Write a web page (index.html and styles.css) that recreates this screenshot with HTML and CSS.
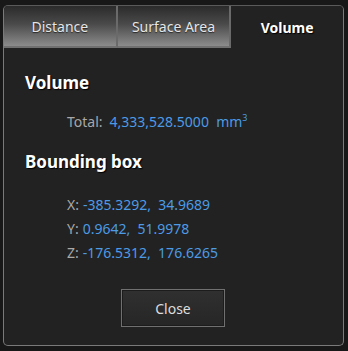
FILE: index.html
```html
<!DOCTYPE html>
<html lang="en">
<head>
    <meta charset="UTF-8">
    <title>Measure</title>
    <link rel="stylesheet" href="styles.css">
</head>
<body>
    <div class="dialog">
        <div class="tabs">
            <div class="tab">Distance</div>
            <div class="tab">Surface Area</div>
            <div class="tab active">Volume</div>
        </div>
        <div class="content">
            <h2>Volume</h2>
            <div class="row total">
                <span class="label">Total:</span>
                <span class="value">4,333,528.5000&nbsp; mm<sup>3</sup></span>
            </div>
            <h2>Bounding box</h2>
            <div class="bbox">
                <div class="row"><span class="label">X:</span><span class="value">-385.3292,&nbsp; 34.9689</span></div>
                <div class="row"><span class="label">Y:</span><span class="value">0.9642,&nbsp; 51.9978</span></div>
                <div class="row"><span class="label">Z:</span><span class="value">-176.5312,&nbsp; 176.6265</span></div>
            </div>
            <div class="actions">
                <button class="close-button">Close</button>
            </div>
        </div>
    </div>
</body>
</html>
```

FILE: styles.css
```css
* {
    margin: 0;
    padding: 0;
    box-sizing: border-box;
    font-family: "Noto Sans", "Open Sans", sans-serif;
}

body {
    background-color: #181818;
    padding: 5px 4px 5px 3px;
}

.dialog {
    width: 341px;
    height: 341px;
    background: #222222;
    border: 1px solid #7a7a7a;
    border-top-color: #5a5a5a;
    border-radius: 5px;
    overflow: hidden;
    display: flex;
    flex-direction: column;
}

.tabs {
    display: flex;
    height: 42px;
    flex-shrink: 0;
}

.tab {
    flex: 1;
    display: flex;
    justify-content: center;
    align-items: center;
    padding-top: 1px;
    color: #e6e6e6;
    font-size: 14px;
    background: linear-gradient(to bottom, #2b2b2b 0%, #4a4a4a 45%, #8c8c8c 100%);
    border-right: 2px solid #6a6a6a;
    border-bottom: 2px solid #707070;
    text-shadow: 0 1px 1px rgba(0, 0, 0, 0.6);
}

.tab.active {
    background: #222222;
    border-right: none;
    border-bottom: none;
    color: #ffffff;
    font-weight: 700;
    text-shadow: 1px 1px 1px #000;
}

.content {
    flex: 1;
    padding: 24px 0 0 21px;
    display: flex;
    flex-direction: column;
}

.content h2 {
    color: #ffffff;
    font-size: 17px;
    font-weight: 700;
    text-shadow: 1px 1px 1px #000;
    line-height: 22px;
}

.row {
    display: flex;
    gap: 7px;
    font-size: 14px;
    line-height: 24px;
    padding-left: 42px;
}

.label {
    color: #a8a8a8;
}

.value {
    color: #4c9be6;
}

.value sup {
    font-size: 9px;
    vertical-align: 6px;
    line-height: 0;
}

.total {
    margin: 16px 0 17px;
}

.bbox {
    margin-top: 20px;
}

.bbox .row {
    gap: 4px;
}

.actions {
    display: flex;
    justify-content: center;
    margin-top: 24px;
    padding-right: 22px;
}

.close-button {
    width: 104px;
    height: 38px;
    background: linear-gradient(to bottom, #303030, #262626);
    border: 1px solid #707070;
    color: #dddddd;
    font-size: 14px;
    box-shadow: inset 0 0 0 1px #1c1c1c;
}
```
